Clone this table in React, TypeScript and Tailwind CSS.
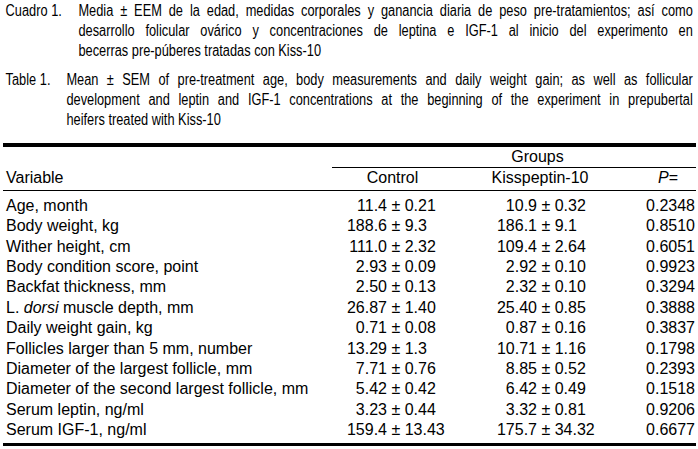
import React from "react";

type Row = { label: React.ReactNode; c: [string, string]; k: [string, string]; p: string };

const rows: Row[] = [
  { label: "Age, month", c: ["11.4", "0.21"], k: ["10.9", "0.32"], p: "0.2348" },
  { label: "Body weight, kg", c: ["188.6", "9.3"], k: ["186.1", "9.1"], p: "0.8510" },
  { label: "Wither height, cm", c: ["111.0", "2.32"], k: ["109.4", "2.64"], p: "0.6051" },
  { label: "Body condition score, point", c: ["2.93", "0.09"], k: ["2.92", "0.10"], p: "0.9923" },
  { label: "Backfat thickness, mm", c: ["2.50", "0.13"], k: ["2.32", "0.10"], p: "0.3294" },
  {
    label: (
      <>
        L. <i>dorsi</i> muscle depth, mm
      </>
    ),
    c: ["26.87", "1.40"],
    k: ["25.40", "0.85"],
    p: "0.3888",
  },
  { label: "Daily weight gain, kg", c: ["0.71", "0.08"], k: ["0.87", "0.16"], p: "0.3837" },
  { label: "Follicles larger than 5 mm, number", c: ["13.29", "1.3"], k: ["10.71", "1.16"], p: "0.1798" },
  { label: "Diameter of the largest follicle, mm", c: ["7.71", "0.76"], k: ["8.85", "0.52"], p: "0.2393" },
  { label: "Diameter of the second largest follicle, mm", c: ["5.42", "0.42"], k: ["6.42", "0.49"], p: "0.1518" },
  { label: "Serum leptin, ng/ml", c: ["3.23", "0.44"], k: ["3.32", "0.81"], p: "0.9206" },
  { label: "Serum IGF-1, ng/ml", c: ["159.4", "13.43"], k: ["175.7", "34.32"], p: "0.6677" },
];

function Value({ v }: { v: [string, string] }) {
  return (
    <div className="flex w-[150px] whitespace-pre">
      <span className="w-[55px] text-right">{v[0]}</span>
      <span>{" ± "}</span>
      <span>{v[1]}</span>
    </div>
  );
}

// caption is set in a condensed face: no narrow font installed, so the
// block is drawn 1/0.8 wide and squeezed back horizontally
function Caption({ label, labelW, lines }: { label: string; labelW: string; lines: string[] }) {
  return (
    <div className="flex pl-[7px] pr-[6px]">
      <div className={`${labelW} shrink-0 whitespace-nowrap`}>{label}</div>
      <div className="flex-1">
        {lines.map((l, i) => (
          <div
            key={i}
            className={i < lines.length - 1 ? "text-justify [text-align-last:justify]" : "text-left"}
          >
            {l}
          </div>
        ))}
      </div>
    </div>
  );
}

export default function App() {
  return (
    <div className="w-[698px] h-[449px] bg-white text-black overflow-hidden">
      <div className="w-[872px] origin-top-left scale-x-[0.8] pt-[1px] text-[16px] leading-[20px] font-['Liberation_Sans',Arial,sans-serif]">
        <Caption
          label="Cuadro 1."
          labelW="w-[91px]"
          lines={[
            "Media ± EEM de la edad, medidas corporales y ganancia diaria de peso pre-tratamientos; así como",
            "desarrollo folicular ovárico y concentraciones de leptina e IGF-1 al inicio del experimento en",
            "becerras pre-púberes tratadas con Kiss-10",
          ]}
        />
        <div className="h-[9px]" />
        <Caption
          label="Table 1."
          labelW="w-[76px]"
          lines={[
            "Mean ± SEM of pre-treatment age, body measurements and daily weight gain; as well as follicular",
            "development and leptin and IGF-1 concentrations at the beginning of the experiment in prepubertal",
            "heifers treated with Kiss-10",
          ]}
        />
      </div>

      <div className="mx-[3px] mt-[13px] w-[693px] text-[16px] leading-[20.4px] font-['Liberation_Sans',Arial,sans-serif]">
        <div className="h-[4px] bg-black" />
        <div className="ml-[329px] pl-[47px] text-center">Groups</div>
        <div className="ml-[329px] h-px bg-black" />
        <div className="flex pl-[3px]">
          <div className="w-[326px]">Variable</div>
          <div className="w-[121px] text-center">Control</div>
          <div className="w-[29px]" />
          <div className="w-[116px] text-center">Kisspeptin-10</div>
          <div className="w-[90px] pr-[10px] text-right">
            <i>P</i>=
          </div>
        </div>
        <div className="mt-[1px] h-px bg-black" />
        <div className="pt-[5px] pb-[2px]">
          {rows.map((r, i) => (
            <div key={i} className="flex pl-[3px]">
              <div className="w-[326px] whitespace-nowrap">{r.label}</div>
              <Value v={r.c} />
              <Value v={r.k} />
              <div className="w-[63px] text-right">{r.p}</div>
            </div>
          ))}
        </div>
        <div className="h-[3px] bg-black" />
      </div>
    </div>
  );
}
